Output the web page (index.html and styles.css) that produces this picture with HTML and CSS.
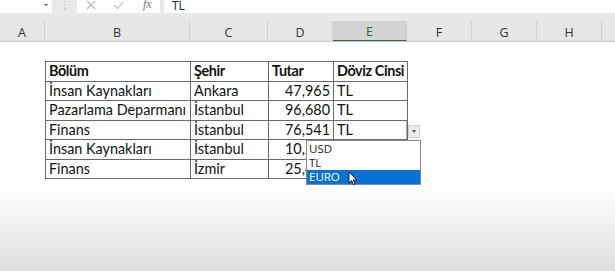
FILE: index.html
```html
<!DOCTYPE html>
<html>
<head>
<meta charset="utf-8">
<link rel="stylesheet" href="styles.css">
</head>
<body>
<div class="fbar">
  <div class="namebox"><span class="nb-arrow"></span></div>
  <div class="grip">⋮</div>
  <div class="fx-icons">
    <svg class="ico" width="12" height="12" viewBox="0 0 12 12"><path d="M2 2 L10 10 M10 2 L2 10" stroke="#b9b9b9" stroke-width="1.1" fill="none"/></svg>
    <svg class="ico" width="12" height="12" viewBox="0 0 12 12"><path d="M1.5 6.5 L4.5 9.5 L10.5 2.5" stroke="#b9b9b9" stroke-width="1.1" fill="none"/></svg>
    <span class="fx">fx</span>
  </div>
  <div class="finput">TL</div>
</div>
<div class="colhead">
  <div class="ch">A</div>
  <div class="ch">B</div>
  <div class="ch">C</div>
  <div class="ch">D</div>
  <div class="ch sel">E</div>
  <div class="ch">F</div>
  <div class="ch">G</div>
  <div class="ch">H</div>
  <div class="ch last"></div>
</div>
<div class="sheet">
  <table class="data">
    <colgroup><col class="cb"><col class="cc"><col class="cd"><col class="ce"></colgroup>
    <tr class="hdr"><td>Bölüm</td><td>Şehir</td><td>Tutar</td><td>Döviz Cinsi</td></tr>
    <tr><td>İnsan Kaynakları</td><td>Ankara</td><td class="num">47,965</td><td>TL</td></tr>
    <tr><td>Pazarlama Deparmanı</td><td>İstanbul</td><td class="num">96,680</td><td>TL</td></tr>
    <tr><td>Finans</td><td>İstanbul</td><td class="num">76,541</td><td class="active">TL
      <div class="dd-btn"><span class="dd-tri"></span></div>
      <div class="dd-list">
        <div class="dd-item">USD</div>
        <div class="dd-item">TL</div>
        <div class="dd-item hl">EURO</div>
        <svg class="cursor" width="11" height="15" viewBox="0 0 11 15"><path d="M1 1 L1 12 L3.6 9.6 L5.4 13.6 L7 12.9 L5.3 9 L8.8 9 Z" fill="#fff" stroke="#222" stroke-width="1" stroke-linejoin="round"/></svg>
      </div>
    </td></tr>
    <tr><td>İnsan Kaynakları</td><td>İstanbul</td><td class="num">10,254</td><td></td></tr>
    <tr><td>Finans</td><td>İzmir</td><td class="num">25,412</td><td></td></tr>
  </table>
</div>
</body>
</html>
```

FILE: styles.css
```css
html, body {
  margin: 0;
  padding: 0;
}
body {
  width: 615px;
  height: 271px;
  overflow: hidden;
  background: linear-gradient(to bottom, #ffffff 0, #ffffff 188px, #f4f4f4 215px, #dedede 271px);
  font-family: "Liberation Sans", Arial, sans-serif;
}
.fbar {
  display: flex;
  height: 13px;
  background: #e8e8e8;
  padding-bottom: 8px;
}
.namebox {
  width: 52px;
  background: #fff;
  position: relative;
}
.nb-arrow {
  position: absolute;
  left: 44px;
  top: 4px;
  width: 0;
  height: 0;
  border-left: 2px solid transparent;
  border-right: 2px solid transparent;
  border-top: 2px solid #555;
}
.grip {
  width: 25px;
  text-align: center;
  color: #b5b5b5;
  font-size: 11px;
  line-height: 10px;
}
.fx-icons {
  width: 83px;
  background: #fff;
  display: flex;
  align-items: flex-start;
  gap: 16px;
  padding-left: 8px;
  box-sizing: border-box;
}
.ico {
  margin-top: -1px;
}
.fx {
  font-family: "Liberation Serif", serif;
  font-style: italic;
  font-size: 12px;
  line-height: 12px;
  margin-top: -2px;
  color: #777;
  margin-left: 2px;
}
.finput {
  flex: 1;
  margin-left: 4px;
  background: #fff;
  font-family: "Open Sans", sans-serif;
  font-size: 12px;
  line-height: 12px;
  color: #222;
  padding-left: 8px;
  overflow: hidden;
}
.colhead {
  display: grid;
  grid-template-columns: 45px 145px 78px 65px 74px 65px 65px 65px 13px;
  height: 20px;
  background: #e6e6e6;
  border-bottom: 1px solid #c6c6c6;
}
.ch {
  font-family: "Open Sans", sans-serif;
  font-size: 12.5px;
  color: #333;
  display: flex;
  align-items: center;
  justify-content: center;
  border-right: 1px solid #cfcfcf;
  box-sizing: border-box;
  padding-top: 2px;
}
.ch.sel {
  background: #d3d3d3;
  border-bottom: 1px solid #217346;
  color: #2a6a45;
}
.ch.last {
  border-right: none;
}
.sheet {
  padding-left: 45px;
  padding-top: 19px;
}
.data {
  width: 362px;
  border-collapse: collapse;
  table-layout: fixed;
  font-family: "Lato", sans-serif;
  font-size: 14.4px;
  color: #111;
}
.cb { width: 145px; }
.cc { width: 78px; }
.cd { width: 65px; }
.ce { width: 74px; }
.data td {
  border: 1px solid #6a6a6a;
  height: 18.5px;
  padding: 0 3px;
  line-height: 18px;
  white-space: nowrap;
  overflow: visible;
}
.data .hdr td {
  font-weight: bold;
  letter-spacing: -0.4px;
}
.data td.num {
  text-align: right;
}
.data td.active {
  position: relative;
  box-shadow: inset -1px 0 0 #9ab8a5;
}
.dd-btn {
  position: absolute;
  left: 74px;
  top: 4px;
  width: 12px;
  height: 13px;
  background: #ececec;
  border: 1px solid #d2d2d2;
  box-sizing: border-box;
  display: flex;
  align-items: center;
  justify-content: center;
}
.dd-tri {
  width: 0;
  height: 0;
  border-left: 2.5px solid transparent;
  border-right: 2.5px solid transparent;
  border-top: 3px solid #555;
}
.dd-list {
  position: absolute;
  left: -28px;
  top: 19px;
  width: 115px;
  height: 45px;
  background: #fff;
  border: 1px solid #8a8a8a;
  box-sizing: border-box;
  padding-top: 1px;
  z-index: 2;
}
.dd-item {
  font-family: "Open Sans", sans-serif;
  font-size: 11.5px;
  line-height: 14px;
  height: 14px;
  padding-left: 2px;
  color: #222;
}
.dd-item.hl {
  background: #0a72d6;
  color: #fff;
}
.cursor {
  position: absolute;
  left: 41px;
  top: 30px;
}
```
